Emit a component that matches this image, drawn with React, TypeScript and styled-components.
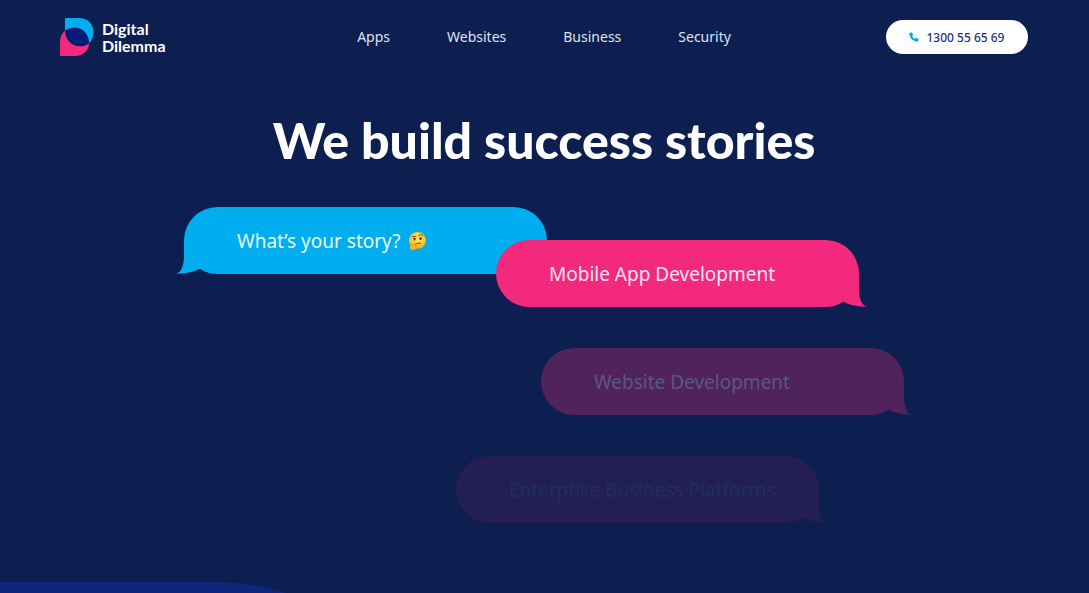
import React from "react";
import styled, { createGlobalStyle, css } from "styled-components";

const GlobalStyle = createGlobalStyle`
  *, *::before, *::after { box-sizing: border-box; }
  body {
    margin: 0;
    background: #0c1f50;
    color: #fff;
    font-family: "Noto Sans", "Open Sans", sans-serif;
  }
`;

const Page = styled.div`
  min-height: 100vh;
  display: flex;
  flex-direction: column;
`;

const Header = styled.header`
  display: grid;
  grid-template-columns: 1fr auto 1fr;
  align-items: center;
  padding: 18px 61px 0 60px;
`;

const Brand = styled.a`
  display: flex;
  align-items: center;
  gap: 8px;
  color: #fff;
  text-decoration: none;
  font: 700 16px/17px Lato, sans-serif;
`;

const BrandName = styled.span`
  display: flex;
  flex-direction: column;
`;

const Nav = styled.nav`
  display: flex;
  gap: 57px;
`;

const NavLink = styled.a`
  color: #dfe3ee;
  font-size: 14px;
  line-height: 20px;
  text-decoration: none;
`;

const CallLink = styled.a`
  justify-self: end;
  display: flex;
  align-items: center;
  justify-content: center;
  gap: 7px;
  width: 142px;
  height: 34px;
  border-radius: 17px;
  background: #fff;
  color: #1d3282;
  font-size: 12px;
  font-weight: 500;
  text-decoration: none;
`;

const Hero = styled.main`
  flex: 1;
  padding: 52px 25px 58px 24px;
`;

const Title = styled.h1`
  margin: 0;
  text-align: center;
  font: 900 50px/64px Lato, sans-serif;
`;

const Chat = styled.div`
  display: flex;
  flex-direction: column;
  gap: 41px;
  max-width: 720px;
  margin: 35px auto 0;
`;

type Tone = "question" | "active" | "fading" | "faint";

const tones: Record<Tone, { fill: string; text: string }> = {
  question: { fill: "#00aeef", text: "#e9f8fe" },
  active: { fill: "#f2297d", text: "#ffe6f0" },
  fading: { fill: "#51235d", text: "#565887" },
  faint: { fill: "#231f53", text: "#1d2f62" },
};

const Bubble = styled.div<{ $tone: Tone; $inset?: number; $overlap?: boolean }>`
  position: relative;
  display: flex;
  align-items: center;
  gap: 8px;
  width: 363px;
  height: 67px;
  padding-left: 53px;
  border-radius: 34px;
  font-size: 19px;
  line-height: 28px;
  white-space: nowrap;
  ${({ $tone }) => css`
    background: ${tones[$tone].fill};
    color: ${tones[$tone].text};
    align-self: ${$tone === "question" ? "flex-start" : "flex-end"};
  `}
  margin-right: ${({ $inset = 0 }) => $inset}px;
  margin-top: ${({ $overlap }) => ($overlap ? "-75px" : "0")};
`;

const TailShape = styled.svg<{ $side: "left" | "right" }>`
  position: absolute;
  bottom: 0;
  ${({ $side }) =>
    $side === "left" ? "left: -8px;" : "right: -8px; transform: scaleX(-1);"}
`;

const Tail = ({ tone }: { tone: Tone }) => (
  <TailShape
    $side={tone === "question" ? "left" : "right"}
    width="34"
    height="34"
    viewBox="0 0 34 34"
    aria-hidden="true"
  >
    <path
      d="M8 0V15C8 26 5 33 0 33.6C9 34 18 32 24.500 28.600L34 20V0Z"
      fill={tones[tone].fill}
    />
  </TailShape>
);

const NextSection = styled.div`
  position: relative;
  height: 11px;
  overflow: hidden;
  &::before {
    content: "";
    position: absolute;
    top: 0;
    left: 0;
    width: 446px;
    height: 450px;
    border-top-right-radius: 230px;
    background: #0e277c;
  }
`;

const Logo = () => (
  <svg width="34" height="38" viewBox="0 0 34 38" aria-hidden="true">
    <path d="M5 0H19C27.500 0 33.500 6 33.500 14C33.500 19 31.500 23 28.800 25.500L5 13Z" fill="#00aeef" />
    <path d="M5 12.500C2 15 0 19 0 24V38H15C23 38 29 32.500 29 25Z" fill="#f2297d" />
    <path d="M5 12.800C8 10.300 11.500 9.500 15 9.500C22.500 9.500 29 16 29 25.200C26 27.500 23 28.300 20 28.300C11 28.300 5 21 5 12.800Z" fill="#001c78" />
  </svg>
);

const Phone = () => (
  <svg width="10" height="10" viewBox="0 0 10 10" aria-hidden="true">
    <path
      d="M2.300 0.400L0.600 0.900C0.300 1 0.200 1.300 0.200 1.600C0.400 6 4 9.500 8.300 9.700C8.700 9.700 8.900 9.600 9 9.300L9.600 7.600C9.700 7.300 9.500 7 9.300 6.800L7.400 5.900C7.100 5.800 6.800 5.900 6.600 6.100L5.900 6.900C4.600 6.300 3.600 5.200 3.100 4L3.900 3.300C4.100 3.100 4.100 2.800 4 2.600L3.200 0.800C3 0.400 2.700 0.300 2.300 0.400Z"
      fill="#00aeef"
    />
  </svg>
);

const ThinkingFace = () => (
  <svg width="18" height="18" viewBox="0 0 36 36" role="img" aria-label="Thinking face">
    <defs>
      <radialGradient id="face" cx="50%" cy="40%" r="60%">
        <stop offset="0" stopColor="#ffe96b" />
        <stop offset="0.700" stopColor="#fdc730" />
        <stop offset="1" stopColor="#ee9a18" />
      </radialGradient>
    </defs>
    <circle cx="19" cy="17" r="17" fill="url(#face)" />
    <ellipse cx="13" cy="14" rx="2.300" ry="3" fill="#53300f" />
    <ellipse cx="25" cy="13" rx="2.300" ry="3" fill="#53300f" />
    <path d="M8 10Q12 7 16 9M21 7Q26 2 30 7" fill="none" stroke="#8a5413" strokeWidth="2" strokeLinecap="round" />
    <path d="M14 24Q20 20 25 23" fill="none" stroke="#6d3e10" strokeWidth="2" strokeLinecap="round" />
    <path d="M6 22C8 21 9 24 9 27L18 23C21 22 22 25 19 26L15 28C18 29 18 35 12 36C6 37 3 33 4 28Z" fill="#fbb62a" stroke="#dc8413" strokeWidth="1.200" />
  </svg>
);

const links = ["Apps", "Websites", "Business", "Security"];

export default function App() {
  return (
    <Page>
      <GlobalStyle />
      <Header>
        <Brand href="#home">
          <Logo />
          <BrandName>
            <span>Digital</span>
            <span>Dilemma</span>
          </BrandName>
        </Brand>
        <Nav aria-label="Main">
          {links.map((label) => (
            <NavLink key={label} href={`#${label.toLowerCase()}`}>
              {label}
            </NavLink>
          ))}
        </Nav>
        <CallLink href="tel:1300556569">
          <Phone />
          1300 55 65 69
        </CallLink>
      </Header>
      <Hero>
        <Title>We build success stories</Title>
        <Chat>
          <Bubble $tone="question">
            <Tail tone="question" />
            What’s your story?
            <ThinkingFace />
          </Bubble>
          <Bubble $tone="active" $inset={45} $overlap>
            <Tail tone="active" />
            Mobile App Development
          </Bubble>
          <Bubble $tone="fading">
            <Tail tone="fading" />
            Website Development
          </Bubble>
          <Bubble $tone="faint" $inset={85}>
            <Tail tone="faint" />
            Enterptise Business Platforms
          </Bubble>
        </Chat>
      </Hero>
      <NextSection />
    </Page>
  );
}
